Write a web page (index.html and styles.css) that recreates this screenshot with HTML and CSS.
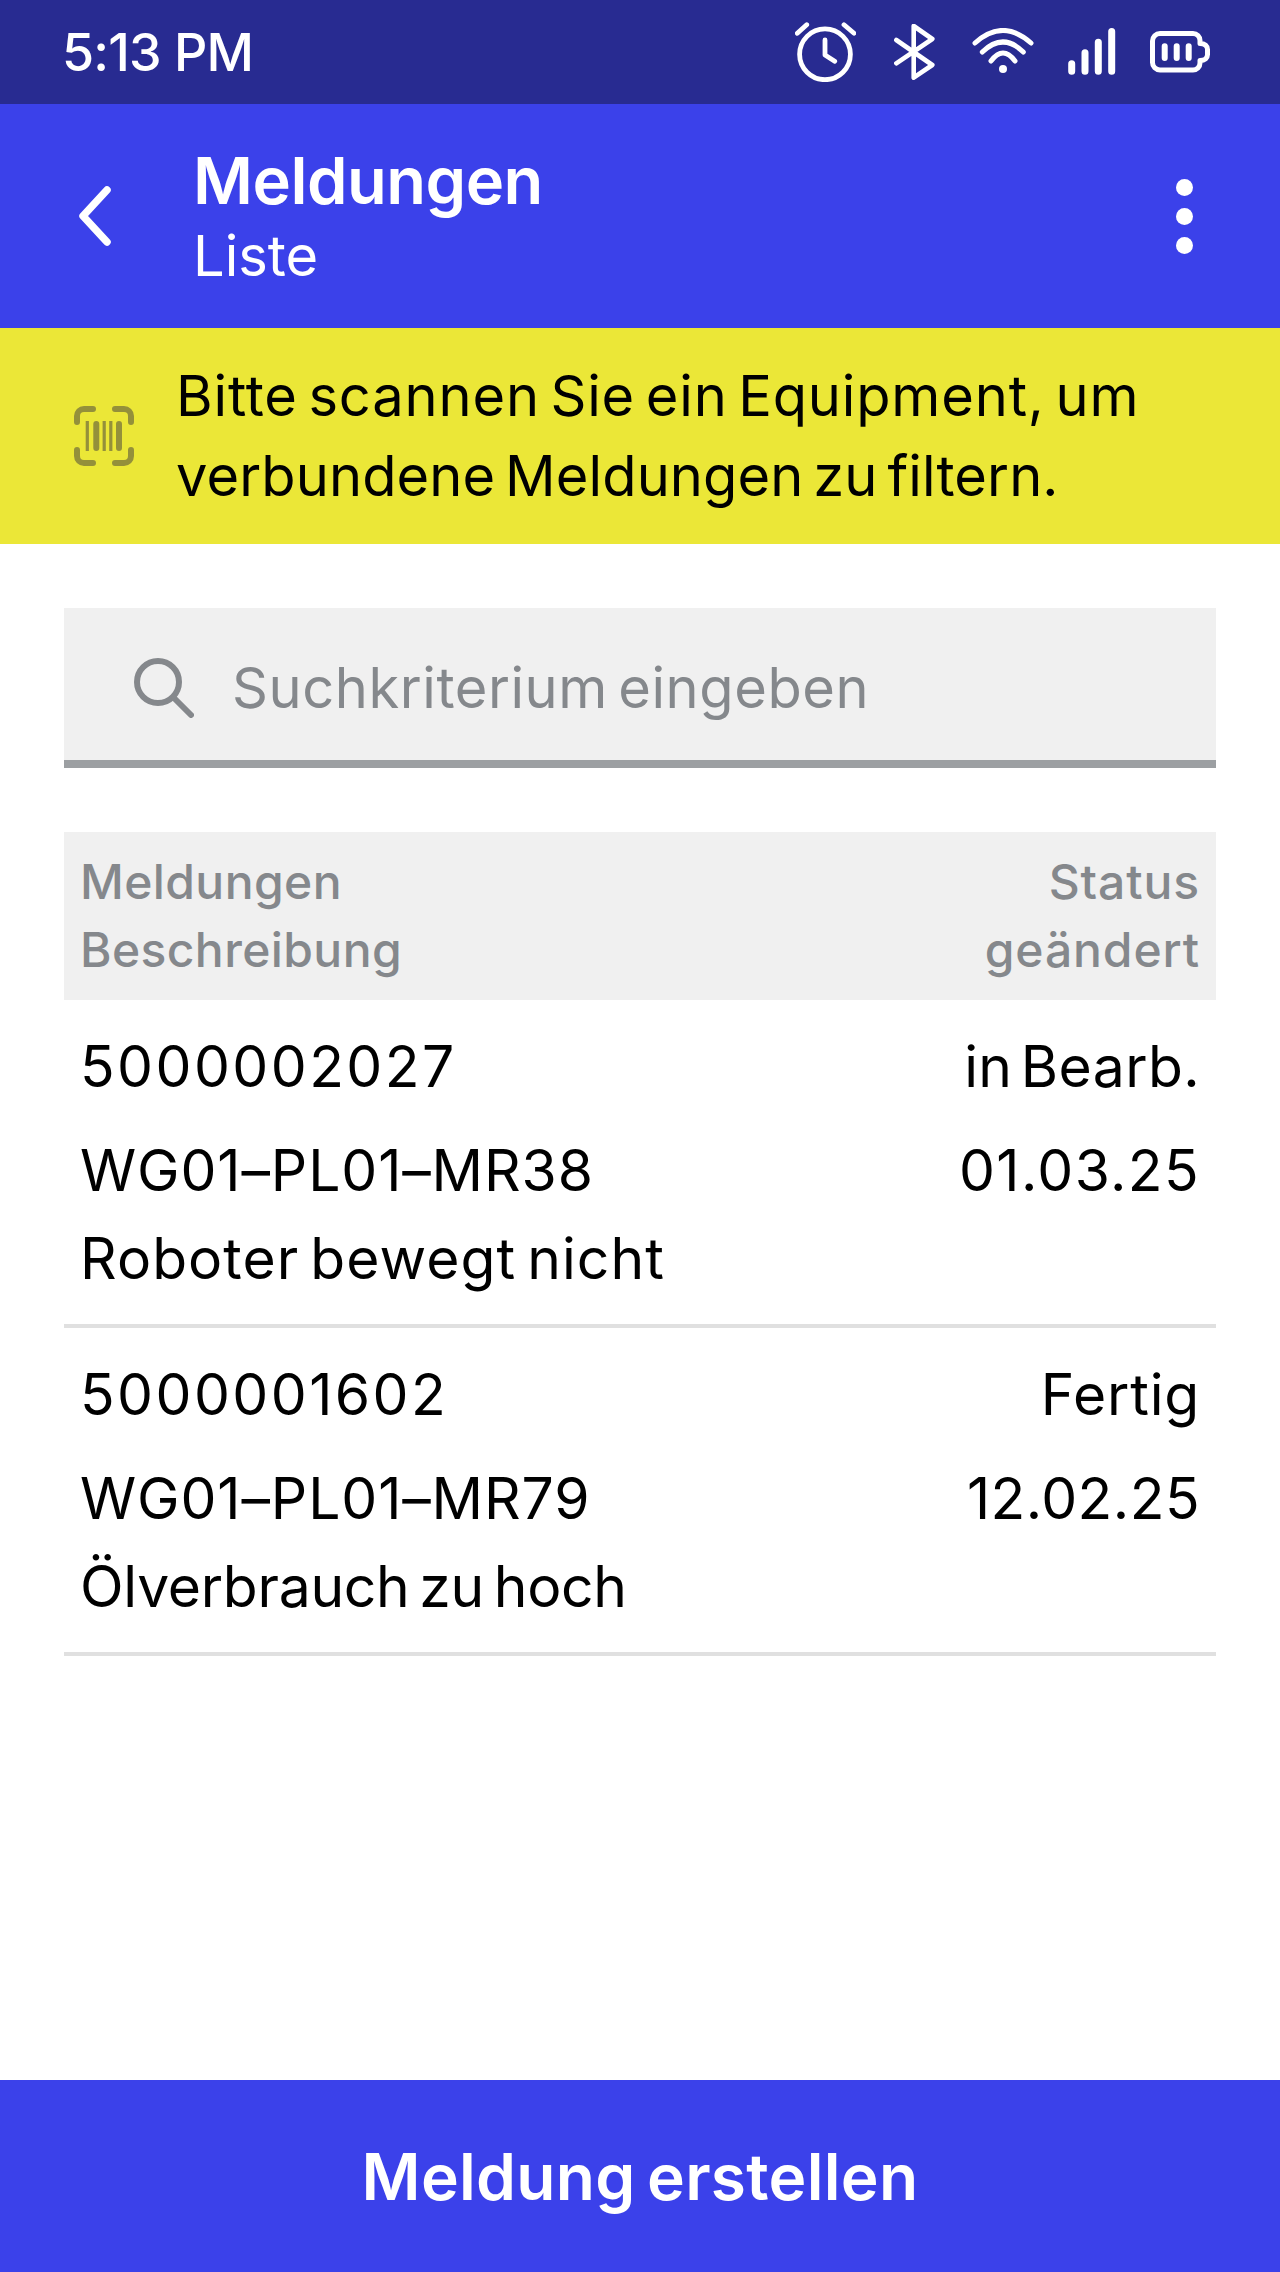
FILE: index.html
```html
<!DOCTYPE html>
<html lang="de">
<head>
    <meta charset="UTF-8">
    <meta name="viewport" content="width=device-width, initial-scale=1.0">
    <title>Meldungen</title>
    <link rel="stylesheet" href="styles.css">
</head>
<body>
    <div class="screen">
        <div class="status-bar">
            <span class="clock">5:13 PM</span>
            <div class="status-icons">
                <svg class="ic-alarm" width="61" height="60" viewBox="0 0 61 60" fill="none" stroke="#fff" stroke-width="4.8" stroke-linecap="round" stroke-linejoin="round">
                    <circle cx="30" cy="32.3" r="25.4"/>
                    <path d="M30 18v15l9.7 6.3M2.3 11.3L11.7 2.7M59 11.3L49 2.7"/>
                </svg>
                <svg class="ic-bt" width="41" height="56" viewBox="0 0 41 56" fill="none" stroke="#fff" stroke-width="4.6" stroke-linecap="round" stroke-linejoin="round">
                    <path d="M2.3 16L38.3 41 19.7 53.7V2L38.3 15 2.3 39.3"/>
                </svg>
                <svg class="ic-wifi" width="62" height="45" viewBox="0 0 62 45" fill="none" stroke="#fff" stroke-width="5" stroke-linecap="round">
                    <path d="M3 15Q31-10 59 15M10.3 24Q31 4 51.3 24M19 33Q31 17 43 33"/>
                    <circle cx="31" cy="41" r="4" fill="#fff" stroke="none"/>
                </svg>
                <svg class="ic-signal" width="48" height="48" viewBox="0 0 48 48" fill="none" stroke="#fff" stroke-width="7" stroke-linecap="round">
                    <path d="M3.7 35.8v7.4M17 24.8v18.4M30.3 14.2v29M43.7 3.5v39.7"/>
                </svg>
                <svg class="ic-battery" width="60" height="42" viewBox="0 0 60 42" fill="none" stroke="#fff" stroke-width="5" stroke-linecap="round" stroke-linejoin="round">
                    <path d="M10 2.5h33a7 7 0 0 1 7 7v3c5 0 7.5 2.5 7.500 6v5c0 3.500-2.500 6-7.500 6v2.500a7 7 0 0 1-7 7H10a7.500 7.500 0 0 1-7.500-7.500V10A7.500 7.500 0 0 1 10 2.500z"/>
                    <path stroke-width="6" d="M14.700 15.300V27M26.700 15.300V27M38.700 15.300V27"/>
                </svg>
            </div>
        </div>

        <header class="app-bar">
            <svg class="back" width="36" height="60" viewBox="0 0 36 60" fill="none" stroke="#fff" stroke-width="7.500" stroke-linecap="round" stroke-linejoin="round">
                <path d="M29 4L5 30l24 26"/>
            </svg>
            <div class="titles">
                <div class="title">Meldungen</div>
                <div class="subtitle">Liste</div>
            </div>
            <div class="more"><span></span><span></span><span></span></div>
        </header>

        <div class="notice">
            <svg width="60" height="60" viewBox="0 0 60 60" fill="none" stroke="#94903a" stroke-linecap="round">
                <path stroke-width="6" d="M3 16V10c0-4 3-7 7-7h9M41 3h9c4 0 7 3 7 7v6M3 44v6c0 4 3 7 7 7h9M41 57h9c4 0 7-3 7-7v-6"/>
                <path stroke-width="3.200" stroke-linecap="butt" d="M13.300 15v30M30.200 15v30M36.800 15v30"/>
                <path stroke-width="6" d="M22.300 18v24M45 18v24"/>
            </svg>
            <p><span class="notice-a">Bitte scannen Sie ein Equipment, um</span> <span class="notice-b">verbundene Meldungen zu filtern.</span></p>
        </div>

        <main class="content">
            <div class="search">
                <svg width="60" height="60" viewBox="0 0 60 60" fill="none" stroke="#85888c" stroke-width="6" stroke-linecap="round">
                    <circle cx="24" cy="24" r="21"/>
                    <path d="M40 40l17 17"/>
                </svg>
                <span>Suchkriterium eingeben</span>
            </div>

            <div class="list-head">
                <div>Meldungen<br>Beschreibung</div>
                <div class="right">Status<br>geändert</div>
            </div>

            <div class="row">
                <div class="line"><span class="num">5000002027</span><span class="state">in Bearb.</span></div>
                <div class="line"><span class="equip">WG01–PL01–MR38</span><span class="date">01.03.25</span></div>
                <div class="desc">Roboter bewegt nicht</div>
            </div>
            <div class="row">
                <div class="line"><span class="num">5000001602</span><span class="state state-wide">Fertig</span></div>
                <div class="line"><span class="equip">WG01–PL01–MR79</span><span class="date date-narrow">12.02.25</span></div>
                <div class="desc desc-tight">Ölverbrauch zu hoch</div>
            </div>
        </main>

        <button class="create">Meldung erstellen</button>
    </div>
</body>
</html>
```

FILE: styles.css
```css
html, body {
    margin: 0;
    padding: 0;
}
body {
    font-family: 'Inter', 'Noto Sans', sans-serif;
    background: #fff;
    color: #000;
}
.screen {
    width: 1280px;
    height: 2272px;
    display: flex;
    flex-direction: column;
}

/* Status bar */
.status-bar {
    height: 104px;
    background-color: #282b91;
    color: #fff;
    display: flex;
    align-items: center;
    justify-content: space-between;
    padding: 0 70px 0 62px;
    flex-shrink: 0;
}
.clock {
    font-size: 52px;
    font-weight: 500;
    letter-spacing: -0.8px;
}
.status-icons {
    display: flex;
    align-items: center;
}
.ic-bt {
    margin-left: 38px;
}
.ic-wifi {
    margin-left: 37px;
    margin-bottom: 4px;
}
.ic-signal {
    margin-left: 34px;
}
.ic-battery {
    margin-left: 34px;
}

/* App bar */
.app-bar {
    height: 224px;
    background-color: #3b41ea;
    color: #fff;
    display: flex;
    align-items: center;
    flex-shrink: 0;
}
.back {
    margin-left: 78px;
    margin-right: 79px;
}
.titles {
    flex: 1;
    padding-top: 3px;
}
.title {
    font-size: 65px;
    font-weight: 600;
    line-height: 76px;
    letter-spacing: -0.500px;
}
.subtitle {
    font-size: 56px;
    line-height: 74px;
}
.more {
    display: flex;
    flex-direction: column;
    gap: 12px;
    margin-right: 87px;
}
.more span {
    width: 17px;
    height: 17px;
    background: #fff;
    border-radius: 50%;
}

/* Yellow notice */
.notice {
    height: 216px;
    background-color: #ebe737;
    display: flex;
    align-items: center;
    padding-left: 74px;
    box-sizing: border-box;
    flex-shrink: 0;
}
.notice svg {
    flex-shrink: 0;
    margin-right: 42px;
}
.notice p {
    margin: 0;
    width: 1040px;
    font-size: 56px;
    line-height: 80px;
    word-spacing: -6px;
}
.notice-a {
    letter-spacing: 0.850px;
}
.notice-b {
    letter-spacing: 0.110px;
}

/* Content */
.content {
    flex: 1;
    padding: 64px 64px 0;
}
.search {
    height: 160px;
    box-sizing: border-box;
    background-color: #f0f0f0;
    border-bottom: 8px solid #9c9fa2;
    display: flex;
    align-items: center;
    padding: 8px 0 0 70px;
    gap: 38px;
    font-size: 56px;
    letter-spacing: 0.570px;
    word-spacing: -6px;
    color: #85888c;
}
.list-head {
    margin-top: 64px;
    height: 168px;
    box-sizing: border-box;
    background-color: #f0f0f0;
    display: flex;
    justify-content: space-between;
    align-items: center;
    padding: 0 16px;
    font-size: 48px;
    font-weight: 500;
    line-height: 68px;
    letter-spacing: 0.400px;
    color: #85888c;
}
.right {
    text-align: right;
    letter-spacing: 0.900px;
}
.row {
    height: 328px;
    box-sizing: border-box;
    border-bottom: 4px solid #e0e0e0;
    padding: 34px 16px 0;
    font-size: 57px;
}
.line {
    display: flex;
    justify-content: space-between;
    height: 104px;
    line-height: 66px;
}
.num {
    letter-spacing: 2.450px;
}
.equip {
    letter-spacing: 0.900px;
}
.state {
    letter-spacing: 0.400px;
    word-spacing: -8px;
}
.state-wide {
    letter-spacing: 0.800px;
}
.date {
    letter-spacing: 1.400px;
}
.date-narrow {
    letter-spacing: 0.450px;
}
.desc {
    line-height: 66px;
    margin-top: -16px;
    letter-spacing: 1.050px;
    word-spacing: -6px;
}
.desc-tight {
    letter-spacing: -0.270px;
}

/* Bottom button */
.create {
    height: 192px;
    border: none;
    background-color: #3b41ea;
    color: #fff;
    font-family: inherit;
    font-size: 64px;
    font-weight: 600;
    letter-spacing: 0.300px;
    word-spacing: -5px;
    flex-shrink: 0;
}
```
